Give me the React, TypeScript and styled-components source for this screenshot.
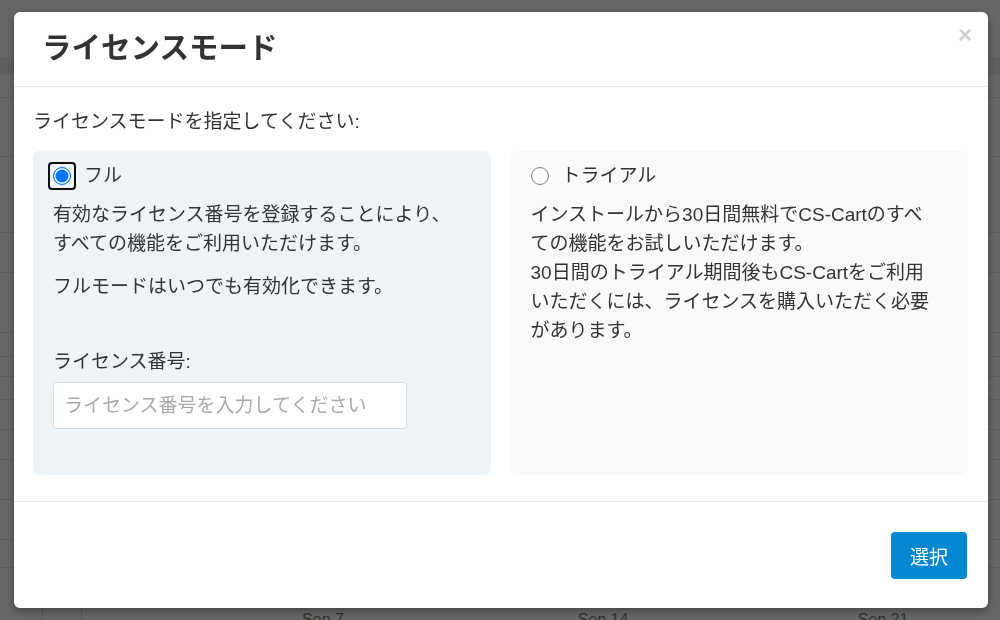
import styled, { createGlobalStyle } from 'styled-components'

const GlobalStyle = createGlobalStyle`
  html, body {
    margin: 0;
    padding: 0;
  }
  body {
    width: 1000px;
    height: 620px;
    overflow: hidden;
    background: #fff;
    font-family: "Liberation Sans", "Noto Sans CJK JP", sans-serif;
    color: #333;
  }
`

/* page behind the modal */
const Page = styled.div`
  height: 620px;
  display: flex;
  flex-direction: column;
  background: #fff;
`
const TopGap = styled.div`
  height: 57px;
`
const Band = styled.div`
  height: 17px;
  background: #ededed;
`
const Row = styled.div<{ $h: number }>`
  height: ${(p) => p.$h}px;
  box-sizing: border-box;
  border-bottom: 1px solid #e2e2e2;
`
const Axis = styled.div`
  flex: 1;
  display: flex;
  align-items: flex-end;
`
const Gutter = styled.div<{ $w: number }>`
  width: ${(p) => p.$w}px;
  flex-shrink: 0;
  align-self: stretch;
  border-right: 1px solid #d8d8d8;
`
const AxisSpacer = styled.div`
  width: 101px;
  flex-shrink: 0;
`
const Tick = styled.div`
  width: 280px;
  flex-shrink: 0;
  text-align: center;
  font-size: 16px;
  line-height: 16px;
  color: #7c7c7c;
  margin-bottom: -8px;
`

/* modal */
const Overlay = styled.div`
  position: fixed;
  inset: 0;
  background: rgba(0, 0, 0, 0.6);
  padding: 12px 0 0 14px;
`
const Dialog = styled.div`
  width: 974px;
  height: 596px;
  background: #fff;
  border-radius: 6px;
  box-shadow: 0 3px 8px rgba(0, 0, 0, 0.35);
  display: flex;
  flex-direction: column;
  overflow: hidden;
`
const Header = styled.div`
  height: 75px;
  box-sizing: border-box;
  border-bottom: 1px solid #e6e6e6;
  display: flex;
  align-items: center;
  padding: 0 16px 3px 28px;
`
const Title = styled.h3`
  margin: 0;
  font-size: 29.5px;
  line-height: 36px;
  font-weight: 700;
  color: #333;
`
const Close = styled.span`
  margin-left: auto;
  align-self: flex-start;
  margin-top: 13px;
  font-size: 24px;
  line-height: 20px;
  font-weight: 700;
  color: #cfcfcf;
`
const Body = styled.div`
  padding: 20px 20px 26px 19px;
`
const Prompt = styled.div`
  font-size: 19px;
  line-height: 29px;
  margin-bottom: 15px;
`
const Cards = styled.div`
  display: grid;
  grid-template-columns: 1fr 1fr;
  gap: 20px;
  height: 324px;
`
const Card = styled.div<{ $active?: boolean }>`
  border-radius: 6px;
  padding: 10px 20px 0;
  background: ${(p) => (p.$active ? '#eef3f7' : '#f9f9f9')};
  font-size: 19px;
  line-height: 29px;
  color: #333;
`
const RadioRow = styled.label`
  display: flex;
  align-items: center;
  gap: 13px;
  height: 29px;
`
const Radio = styled.span<{ $checked?: boolean }>`
  position: relative;
  width: 18px;
  height: 18px;
  box-sizing: border-box;
  border-radius: 50%;
  flex-shrink: 0;
  background: ${(p) => (p.$checked ? '#0075ff' : '#fff')};
  border: ${(p) => (p.$checked ? '1.5px solid #0075ff' : '1px solid #7a7a7a')};
  box-shadow: ${(p) => (p.$checked ? 'inset 0 0 0 1.5px #fff' : 'none')};
  &::after {
    content: '';
    display: ${(p) => (p.$checked ? 'block' : 'none')};
    position: absolute;
    inset: -6px;
    border: 2px solid #101010;
    border-radius: 4px;
  }
`
const Para = styled.p<{ $gap: number }>`
  margin: ${(p) => p.$gap}px 0 0;
  white-space: nowrap;
`
const FieldLabel = styled.div`
  margin-top: 46px;
`
const Input = styled.input`
  display: block;
  margin-top: 6px;
  width: 354px;
  height: 47px;
  box-sizing: border-box;
  border: 1px solid #d8dcdf;
  border-radius: 4px;
  padding: 0 10px;
  font: inherit;
  font-size: 19px;
  color: #333;
  background: #fff;
  outline: none;
  &::placeholder {
    color: #a8a8a8;
  }
`
const Footer = styled.div`
  border-top: 1px solid #e6e6e6;
  padding: 30px 21px 29px;
  display: flex;
  justify-content: flex-end;
`
const Button = styled.button`
  width: 76px;
  height: 47px;
  border: none;
  border-radius: 4px;
  background: #0288d1;
  color: #fff;
  font-family: inherit;
  font-size: 19px;
`

const rowLines = [98, 157, 233, 273, 333, 357, 377, 400, 430, 460, 500, 540, 568]

export default function App() {
  let prev = 74
  return (
    <>
      <GlobalStyle />
      <Page>
        <TopGap />
        <Band />
        {rowLines.map((y) => {
          const h = y - prev
          prev = y
          return <Row key={y} $h={h} />
        })}
        <Axis>
          <Gutter $w={42} />
          <Gutter $w={38} />
          <AxisSpacer />
          <Tick>Sep 7</Tick>
          <Tick>Sep 14</Tick>
          <Tick>Sep 21</Tick>
        </Axis>
      </Page>
      <Overlay>
        <Dialog>
          <Header>
            <Title>ライセンスモード</Title>
            <Close>×</Close>
          </Header>
          <Body>
            <Prompt>ライセンスモードを指定してください:</Prompt>
            <Cards>
              <Card $active>
                <RadioRow>
                  <Radio $checked />
                  フル
                </RadioRow>
                <Para $gap={10}>
                  有効なライセンス番号を登録することにより、
                  <br />
                  すべての機能をご利用いただけます。
                </Para>
                <Para $gap={14}>フルモードはいつでも有効化できます。</Para>
                <FieldLabel>ライセンス番号:</FieldLabel>
                <Input placeholder="ライセンス番号を入力してください" />
              </Card>
              <Card>
                <RadioRow>
                  <Radio />
                  トライアル
                </RadioRow>
                <Para $gap={10}>
                  インストールから30日間無料でCS-Cartのすべ
                  <br />
                  ての機能をお試しいただけます。
                  <br />
                  30日間のトライアル期間後もCS-Cartをご利用
                  <br />
                  いただくには、ライセンスを購入いただく必要
                  <br />
                  があります。
                </Para>
              </Card>
            </Cards>
          </Body>
          <Footer>
            <Button>選択</Button>
          </Footer>
        </Dialog>
      </Overlay>
    </>
  )
}
